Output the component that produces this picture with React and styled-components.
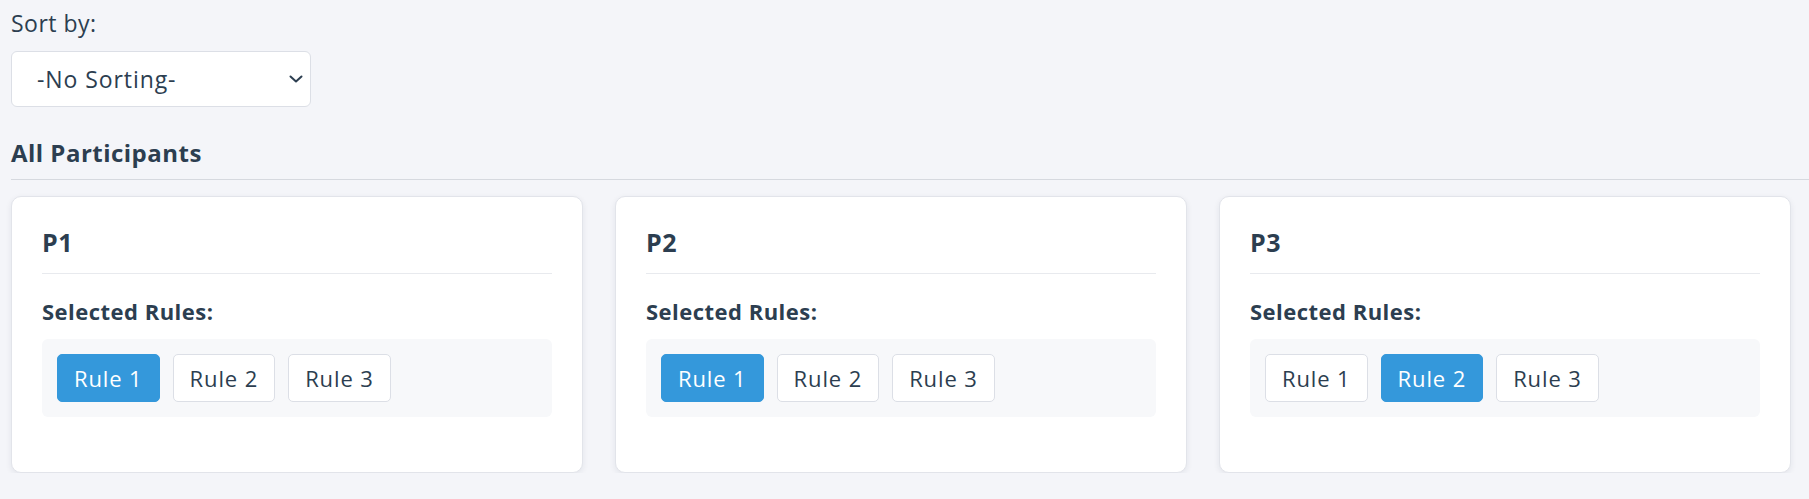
import React from 'react'
import styled, { createGlobalStyle } from 'styled-components'

const GlobalStyle = createGlobalStyle`
  body {
    margin: 0;
    background-color: #f4f5f9;
    font-family: "Open Sans", "Liberation Sans", sans-serif;
    font-weight: 500;
    color: #2c3e50;
    letter-spacing: 0.03em;
  }
`

const Page = styled.div`
  padding: 7px 0 0 11px;
`

const SortLabel = styled.div`
  font-size: 23px;
  line-height: 33px;
`

const SelectWrap = styled.div`
  position: relative;
  width: 300px;
  margin-top: 11px;
`

const Select = styled.select`
  appearance: none;
  width: 300px;
  height: 56px;
  padding: 0 40px 0 25px;
  border: 1px solid #dcdfe6;
  border-radius: 6px;
  background-color: #fff;
  font-family: inherit;
  font-weight: inherit;
  font-size: 23px;
  letter-spacing: 0.04em;
  color: #2c3e50;
  outline: none;
`

const Chevron = styled.svg`
  position: absolute;
  right: 8px;
  top: 24px;
  pointer-events: none;
`

const SectionTitle = styled.h2`
  margin: 30px 0 0;
  padding-bottom: 11px;
  border-bottom: 1px solid #d6d9df;
  font-size: 24px;
  line-height: 31px;
  font-weight: 700;
`

const CardGrid = styled.div`
  display: grid;
  grid-template-columns: repeat(3, 572px);
  gap: 32px;
  margin-top: 16px;
`

const Card = styled.div`
  background-color: #fff;
  border: 1px solid #e2e4ea;
  border-radius: 10px;
  box-shadow: 0 2px 6px rgba(30, 40, 60, 0.08);
  padding: 30px 30px 55px;
`

const CardTitle = styled.h3`
  margin: 0;
  padding-bottom: 16px;
  border-bottom: 1px solid #e8eaee;
  font-size: 25px;
  line-height: 30px;
  font-weight: 700;
`

const RulesLabel = styled.div`
  margin-top: 23px;
  font-size: 22px;
  line-height: 29px;
  font-weight: 700;
`

const RulesPanel = styled.div`
  display: flex;
  gap: 13px;
  margin-top: 13px;
  padding: 15px;
  background-color: #f7f8fa;
  border-radius: 6px;
`

const RuleButton = styled.button`
  height: 48px;
  padding: 0 16px;
  border: 1px solid ${p => (p.$active ? '#3498db' : '#dcdfe6')};
  border-radius: 5px;
  background-color: ${p => (p.$active ? '#3498db' : '#fff')};
  color: ${p => (p.$active ? '#fff' : '#2c3e50')};
  font-family: inherit;
  font-weight: inherit;
  font-size: 22px;
  letter-spacing: 0.04em;
  cursor: pointer;
`

const participants = [
  { name: 'P1', selected: 'Rule 1' },
  { name: 'P2', selected: 'Rule 1' },
  { name: 'P3', selected: 'Rule 2' },
]

const rules = ['Rule 1', 'Rule 2', 'Rule 3']

const App = () => (
  <Page>
    <GlobalStyle />
    <SortLabel>Sort by:</SortLabel>
    <SelectWrap>
      <Select defaultValue="none">
        <option value="none">-No Sorting-</option>
      </Select>
      <Chevron width="14" height="8" viewBox="0 0 14 8">
        <polyline points="1.5,1.5 7,6.5 12.5,1.5" fill="none" stroke="#2c3e50" strokeWidth="2" strokeLinecap="round" strokeLinejoin="round" />
      </Chevron>
    </SelectWrap>
    <SectionTitle>All Participants</SectionTitle>
    <CardGrid>
      {participants.map(p => (
        <Card key={p.name}>
          <CardTitle>{p.name}</CardTitle>
          <RulesLabel>Selected Rules:</RulesLabel>
          <RulesPanel>
            {rules.map(rule => (
              <RuleButton key={rule} $active={rule === p.selected}>
                {rule}
              </RuleButton>
            ))}
          </RulesPanel>
        </Card>
      ))}
    </CardGrid>
  </Page>
)

export default App
